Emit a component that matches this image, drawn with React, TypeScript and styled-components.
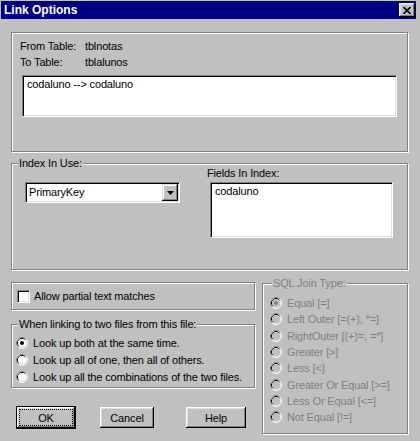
import React from "react";
import styled, { createGlobalStyle } from "styled-components";

const Global = createGlobalStyle`
  html, body { margin: 0; padding: 0; background: #c0c0c0; }
  body {
    font-family: "Liberation Sans", Arial, sans-serif;
    font-size: 11px;
    letter-spacing: -0.15px;
    color: #000;
  }
`;

const Window = styled.div`
  width: 420px;
  height: 441px;
  box-sizing: border-box;
  background: #c0c0c0;
  padding: 1px 0 0 1px;
  display: flex;
  flex-direction: column;
`;

const TitleBar = styled.div`
  height: 18px;
  margin-right: 4px;
  background: #000080;
  color: #fff;
  display: flex;
  align-items: center;
  justify-content: space-between;
  padding: 0 1px 0 3px;
  font-weight: bold;
  font-size: 12px;
  letter-spacing: 0;
`;

const CloseButton = styled.div`
  box-sizing: border-box;
  width: 16px;
  height: 14px;
  background: #c0c0c0;
  display: flex;
  align-items: center;
  justify-content: center;
  box-shadow: inset -1px -1px #000, inset 1px 1px #fff, inset -2px -2px #808080, inset 2px 2px #dfdfdf;
`;

const Content = styled.div`
  display: flex;
  flex-direction: column;
  padding: 13px 12px 0 10px;
`;

const Group = styled.div<{ $h: number; $mt?: number }>`
  position: relative;
  box-sizing: border-box;
  height: ${(p) => p.$h}px;
  margin-top: ${(p) => p.$mt ?? 0}px;
  border: 1px solid #808080;
  box-shadow: 1px 1px 0 #fff, inset 1px 1px 0 #fff;
`;

const Legend = styled.span<{ $left: number; $disabled?: boolean }>`
  position: absolute;
  top: -8px;
  left: ${(p) => p.$left}px;
  padding: 0 1px;
  line-height: 14px;
  background: #c0c0c0;
  white-space: nowrap;
  color: ${(p) => (p.$disabled ? "#808080" : "#000")};
`;

const TablesBlock = styled.div`
  display: flex;
  flex-direction: column;
  padding: 5px 10px 0 8px;
`;

const InfoGrid = styled.div`
  display: grid;
  grid-template-columns: 65px auto;
  grid-auto-rows: 16px;
  align-items: center;
`;

const Sunken = styled.div<{ $w?: number; $h: number }>`
  box-sizing: border-box;
  width: ${(p) => (p.$w ? `${p.$w}px` : "auto")};
  height: ${(p) => p.$h}px;
  background: #fff;
  border: 1px solid;
  border-color: #808080 #fff #fff #808080;
  box-shadow: inset 1px 1px 0 #000, inset -1px -1px 0 #dfdfdf;
  padding: 1px;
`;

const ListText = styled.div`
  padding: 0 3px;
  line-height: 13px;
  margin-top: 1px;
`;

const ListBoxWrap = styled.div`
  margin: 5px 0 0 2px;
`;

const IndexRow = styled.div`
  display: flex;
  padding: 2px 0 0 13px;
`;

const ComboCol = styled.div`
  padding-top: 16px;
`;

const ComboInner = styled.div`
  display: flex;
  align-items: center;
  justify-content: space-between;
  height: 100%;
`;

const ComboText = styled.span`
  padding-left: 2px;
  line-height: 13px;
`;

const DropButton = styled.div`
  box-sizing: border-box;
  width: 16px;
  height: 17px;
  background: #c0c0c0;
  display: flex;
  align-items: center;
  justify-content: center;
  box-shadow: inset -1px -1px #000, inset 1px 1px #dfdfdf, inset -2px -2px #808080, inset 2px 2px #fff;
`;

const FieldsCol = styled.div`
  display: flex;
  flex-direction: column;
  margin-left: 27px;
`;

const FieldLabel = styled.span`
  line-height: 14px;
`;

const FieldsBoxWrap = styled.div`
  margin: 2px 0 0 3px;
`;

const Bottom = styled.div`
  display: grid;
  grid-template-columns: 244px 146px;
  column-gap: 7px;
  margin-top: 12px;
  align-items: start;
`;

const LeftCol = styled.div`
  display: flex;
  flex-direction: column;
`;

const CheckRow = styled.div`
  display: flex;
  align-items: center;
  height: 100%;
  padding-left: 5px;
  gap: 4px;
`;

const CheckBox = styled.span`
  box-sizing: border-box;
  width: 13px;
  height: 13px;
  background: #fff;
  border: 1px solid;
  border-color: #808080 #fff #fff #808080;
  box-shadow: inset 1px 1px 0 #000, inset -1px -1px 0 #dfdfdf;
`;

const OptionList = styled.div<{ $pt: number; $pl: number }>`
  display: flex;
  flex-direction: column;
  padding: ${(p) => p.$pt}px 0 0 ${(p) => p.$pl}px;
`;

const OptionRow = styled.div<{ $h: number; $disabled?: boolean }>`
  display: flex;
  align-items: center;
  height: ${(p) => p.$h}px;
  gap: 5px;
  white-space: nowrap;
  color: ${(p) => (p.$disabled ? "#808080" : "#000")};
`;

const ButtonRow = styled.div`
  display: flex;
  align-items: center;
  margin-top: 18px;
  padding-left: 5px;
`;

const Button = styled.button<{ $w: number; $ml?: number; $default?: boolean }>`
  box-sizing: border-box;
  width: ${(p) => p.$w}px;
  height: ${(p) => (p.$default ? 23 : 21)}px;
  margin-left: ${(p) => p.$ml ?? 0}px;
  padding: ${(p) => (p.$default ? "3px" : "0")};
  background: #c0c0c0;
  font-family: "Liberation Sans", Arial, sans-serif;
  font-size: 11px;
  letter-spacing: -0.15px;
  color: #000;
  border: ${(p) => (p.$default ? "1px solid #000" : "none")};
  box-shadow: inset -1px -1px #000, inset 1px 1px #fff, inset -2px -2px #808080, inset 2px 2px #dfdfdf;
  display: flex;
  align-items: stretch;
  justify-content: center;
`;

const FocusRing = styled.span<{ $on?: boolean }>`
  flex: 1;
  display: flex;
  align-items: center;
  justify-content: center;
  outline: ${(p) => (p.$on ? "1px dotted #000" : "none")};
  outline-offset: 0;
`;

function Radio({ checked, disabled }: { checked?: boolean; disabled?: boolean }) {
  return (
    <svg width="12" height="12" viewBox="0 0 12 12" style={{ flex: "none" }}>
      <circle cx="6" cy="6" r="5.5" fill="none" stroke="#fff" strokeWidth="1" />
      <path d="M2.11 9.89 A5.5 5.5 0 0 1 9.89 2.11" fill="none" stroke="#808080" strokeWidth="1" />
      <circle cx="6" cy="6" r="4.5" fill="none" stroke="#dfdfdf" strokeWidth="1" />
      <path d="M2.82 9.18 A4.5 4.5 0 0 1 9.18 2.82" fill="none" stroke="#000" strokeWidth="1" />
      <circle cx="6" cy="6" r="4" fill={disabled ? "#c0c0c0" : "#fff"} />
      {checked && <circle cx="6" cy="6" r="2" fill={disabled ? "#808080" : "#000"} />}
    </svg>
  );
}

const linkOptions = [
  "Look up both at the same time.",
  "Look up all of one, then all of others.",
  "Look up all the combinations of the two files.",
];

const joinTypes = [
  "Equal [=]",
  "Left Outer [=(+), *=]",
  "RightOuter [(+)=, =*]",
  "Greater [>]",
  "Less [<]",
  "Greater Or Equal [>=]",
  "Less Or Equal [<=]",
  "Not Equal [!=]",
];

export default function App() {
  return (
    <>
      <Global />
      <Window>
        <TitleBar>
          <span>Link Options</span>
          <CloseButton>
            <svg width="8" height="7" viewBox="0 0 8 7">
              <path d="M0.5 0 L7.5 7 M7.5 0 L0.5 7" stroke="#000" strokeWidth="1.6" />
            </svg>
          </CloseButton>
        </TitleBar>
        <Content>
          <Group $h={120}>
            <TablesBlock>
              <InfoGrid>
                <span>From Table:</span>
                <span>tblnotas</span>
                <span>To Table:</span>
                <span>tblalunos</span>
              </InfoGrid>
              <ListBoxWrap>
                <Sunken $h={42}>
                  <ListText>{"codaluno --> codaluno"}</ListText>
                </Sunken>
              </ListBoxWrap>
            </TablesBlock>
          </Group>

          <Group $h={107} $mt={11}>
            <Legend $left={6}>Index In Use:</Legend>
            <IndexRow>
              <ComboCol>
                <Sunken $w={155} $h={21}>
                  <ComboInner>
                    <ComboText>PrimaryKey</ComboText>
                    <DropButton>
                      <svg width="7" height="4" viewBox="0 0 7 4">
                        <path d="M0 0 H7 L3.5 4 Z" fill="#000" />
                      </svg>
                    </DropButton>
                  </ComboInner>
                </Sunken>
              </ComboCol>
              <FieldsCol>
                <FieldLabel>Fields In Index:</FieldLabel>
                <FieldsBoxWrap>
                  <Sunken $w={183} $h={56}>
                    <ListText>codaluno</ListText>
                  </Sunken>
                </FieldsBoxWrap>
              </FieldsCol>
            </IndexRow>
          </Group>

          <Bottom>
            <LeftCol>
              <Group $h={28}>
                <CheckRow>
                  <CheckBox />
                  <span>Allow partial text matches</span>
                </CheckRow>
              </Group>
              <Group $h={64} $mt={14}>
                <Legend $left={6}>When linking to two files from this file:</Legend>
                <OptionList $pt={9} $pl={4}>
                  {linkOptions.map((t, i) => (
                    <OptionRow key={t} $h={17}>
                      <Radio checked={i === 0} />
                      <span>{t}</span>
                    </OptionRow>
                  ))}
                </OptionList>
              </Group>
              <ButtonRow>
                <Button $w={60} $default>
                  <FocusRing $on>OK</FocusRing>
                </Button>
                <Button $w={54} $ml={24}>
                  <FocusRing>Cancel</FocusRing>
                </Button>
                <Button $w={60} $ml={32}>
                  <FocusRing>Help</FocusRing>
                </Button>
              </ButtonRow>
            </LeftCol>
            <Group $h={151} $mt={1}>
              <Legend $left={9} $disabled>
                SQL Join Type:
              </Legend>
              <OptionList $pt={11} $pl={7}>
                {joinTypes.map((t, i) => (
                  <OptionRow key={t} $h={16.3} $disabled>
                    <Radio checked={i === 0} disabled />
                    <span>{t}</span>
                  </OptionRow>
                ))}
              </OptionList>
            </Group>
          </Bottom>
        </Content>
      </Window>
    </>
  );
}
